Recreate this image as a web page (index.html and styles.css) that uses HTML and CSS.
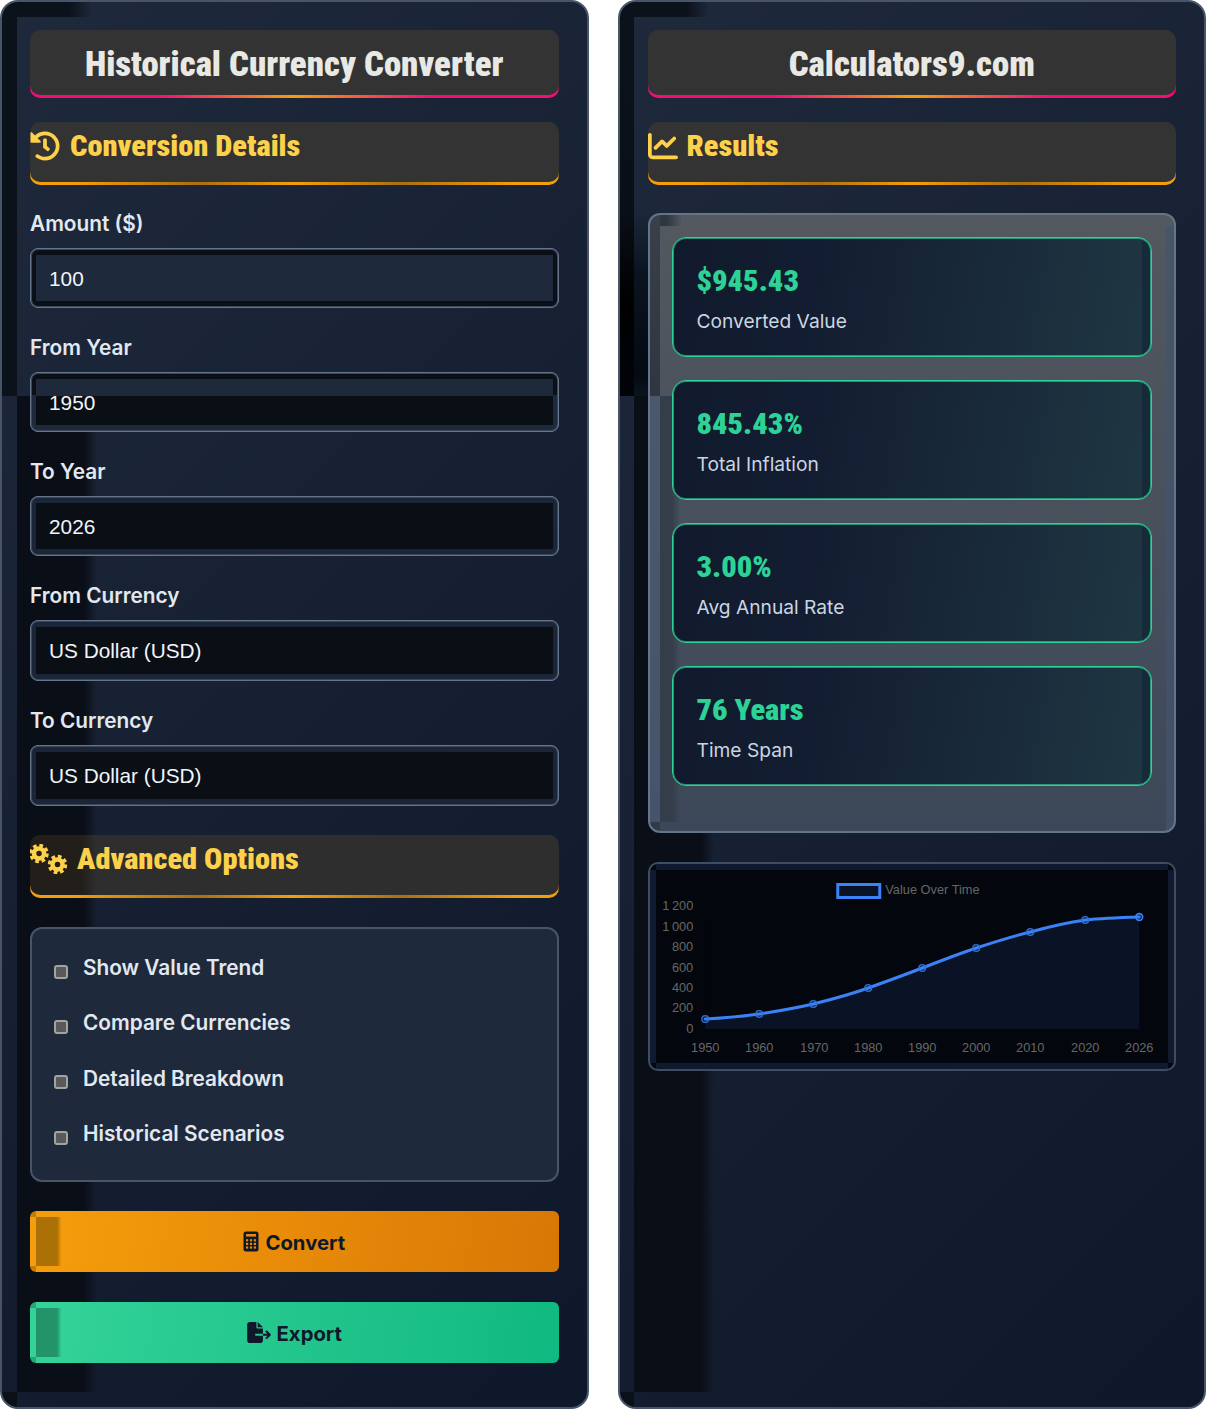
FILE: index.html
```html
<!DOCTYPE html>
<html lang="en">
<head>
<meta charset="utf-8">
<title>Historical Currency Converter</title>
<link rel="stylesheet" href="styles.css">
</head>
<body>
<main class="page">
  <section class="panel panel-form">
    <div class="banner"><h1 class="banner-inner">Historical Currency Converter</h1></div>
    <div class="section-head"><h2 class="section-inner">
      <svg class="icon-head" viewBox="0 0 512 512"><path d="M504 255.531c.253 136.64-111.18 248.372-247.82 248.468-59.015.042-113.223-20.53-155.822-54.911-11.077-8.94-11.905-25.541-1.839-35.607l11.267-11.267c8.609-8.609 22.353-9.551 31.891-1.984C173.062 425.135 212.781 440 256 440c101.705 0 184-82.311 184-184 0-101.705-82.311-184-184-184-48.814 0-93.149 18.969-126.068 49.932l50.754 50.754c10.08 10.08 2.941 27.314-11.313 27.314H24c-8.837 0-16-7.163-16-16V38.627c0-14.254 17.234-21.393 27.314-11.314l49.372 49.372C129.209 34.136 189.552 8 256 8c136.81 0 247.747 110.78 248 247.531zm-180.912 78.784l9.823-12.63c8.138-10.463 6.253-25.542-4.21-33.679L288 256.349V152c0-13.255-10.745-24-24-24h-16c-13.255 0-24 10.745-24 24v135.651l65.409 50.874c10.463 8.137 25.541 6.253 33.679-4.21z"/></svg>
      Conversion Details</h2></div>

    <div class="field first"><label class="field-label" for="amount">Amount ($)</label><input id="amount" class="control control-light" type="text" value="100"></div>
    <div class="field"><label class="field-label" for="from-year">From Year</label><input id="from-year" class="control control-split" type="text" value="1950"></div>
    <div class="field"><label class="field-label" for="to-year">To Year</label><input id="to-year" class="control control-dark" type="text" value="2026"></div>
    <div class="field"><label class="field-label" for="from-cur">From Currency</label><select id="from-cur" class="control control-dark control-select"><option>US Dollar (USD)</option></select></div>
    <div class="field"><label class="field-label" for="to-cur">To Currency</label><select id="to-cur" class="control control-dark control-select"><option>US Dollar (USD)</option></select></div>

    <div class="section-head section-advanced"><h2 class="section-inner section-inner-shaded">
      <svg class="icon-gears" viewBox="0 0 37 30">
        <circle class="gear-ring" cx="9" cy="9.5" r="5"/><circle class="gear-teeth" cx="9" cy="9.5" r="8"/>
        <circle class="gear-ring" cx="27.5" cy="20.5" r="5"/><circle class="gear-teeth" cx="27.5" cy="20.5" r="8"/>
      </svg>
      Advanced Options</h2></div>

    <div class="options">
      <label class="option"><input class="check" type="checkbox"><span>Show Value Trend</span></label>
      <label class="option"><input class="check" type="checkbox"><span>Compare Currencies</span></label>
      <label class="option"><input class="check" type="checkbox"><span>Detailed Breakdown</span></label>
      <label class="option"><input class="check" type="checkbox"><span>Historical Scenarios</span></label>
    </div>

    <button class="action action-convert" type="button">
      <svg class="icon-calc" viewBox="0 0 16 21"><rect x="0.5" y="0.5" width="15" height="20" rx="2.5" class="calc-body"/><rect x="3" y="3" width="10" height="2.6" class="calc-dot"/><rect x="3" y="8.2" width="2.2" height="2.2" class="calc-dot"/><rect x="6.9" y="8.2" width="2.2" height="2.2" class="calc-dot"/><rect x="10.8" y="8.2" width="2.2" height="2.2" class="calc-dot"/><rect x="3" y="11.8" width="2.2" height="2.2" class="calc-dot"/><rect x="6.9" y="11.8" width="2.2" height="2.2" class="calc-dot"/><rect x="10.8" y="11.8" width="2.2" height="2.2" class="calc-dot"/><rect x="3" y="15.4" width="2.2" height="2.2" class="calc-dot"/><rect x="6.9" y="15.4" width="2.2" height="2.2" class="calc-dot"/><rect x="10.8" y="15.4" width="2.2" height="2.2" class="calc-dot"/></svg>
      Convert</button>
    <button class="action action-export" type="button">
      <svg class="icon-export" viewBox="0 0 576 512"><path d="M0 64C0 28.7 28.7 0 64 0H224V128c0 17.7 14.3 32 32 32H384V288H216c-13.3 0-24 10.7-24 24s10.7 24 24 24H384V448c0 35.3-28.7 64-64 64H64c-35.3 0-64-28.7-64-64V64zM384 336V288H494.1l-39-39c-9.4-9.4-9.4-24.6 0-33.9s24.6-9.4 33.9 0l80 80c9.4 9.4 9.4 24.6 0 33.9l-80 80c-9.4 9.4-24.6 9.4-33.9 0s-9.4-24.6 0-33.9l39-39H384zm0-208H256V0L384 128z"/></svg>
      Export</button>
  </section>

  <section class="panel panel-results">
    <div class="banner"><h1 class="banner-inner">Calculators9.com</h1></div>
    <div class="section-head"><h2 class="section-inner section-inner-results">
      <svg class="icon-head" viewBox="0 0 512 512"><path d="M64 64c0-17.7-14.3-32-32-32S0 46.3 0 64V400c0 44.2 35.8 80 80 80H480c17.7 0 32-14.3 32-32s-14.3-32-32-32H80c-8.8 0-16-7.2-16-16V64zm406.6 86.6c12.5-12.5 12.5-32.8 0-45.3s-32.8-12.5-45.3 0L320 210.7l-57.4-57.4c-12.5-12.5-32.8-12.5-45.3 0l-112 112c-12.5 12.5-12.5 32.8 0 45.3s32.8 12.5 45.3 0L240 221.3l57.4 57.4c12.5 12.5 32.8 12.5 45.3 0l128-128z"/></svg>
      Results</h2></div>

    <div class="results">
      <article class="card"><div class="card-value">$945.43</div><div class="card-label">Converted Value</div></article>
      <article class="card"><div class="card-value">845.43%</div><div class="card-label">Total Inflation</div></article>
      <article class="card"><div class="card-value">3.00%</div><div class="card-label">Avg Annual Rate</div></article>
      <article class="card"><div class="card-value">76 Years</div><div class="card-label">Time Span</div></article>
    </div>

    <div class="chart-box">
      <svg class="chart" viewBox="0 0 512 193">
        <rect class="chart-area" x="49" y="47" width="434" height="112"/>
        <path class="chart-fill" d="M49 149 L103 144 L157 134 L212 118 L266 98 L320 78 L374 62 L429 50 L483 47 L483 159 L49 159 Z"/>
        <rect class="legend-box" x="181.5" y="14.5" width="42" height="13"/>
        <text class="chart-text" x="229" y="24">Value Over Time</text>
        <text class="chart-text tick-y" x="37" y="40">1&#8239;200</text>
        <text class="chart-text tick-y" x="37" y="61">1&#8239;000</text>
        <text class="chart-text tick-y" x="37" y="81">800</text>
        <text class="chart-text tick-y" x="37" y="102">600</text>
        <text class="chart-text tick-y" x="37" y="122">400</text>
        <text class="chart-text tick-y" x="37" y="142">200</text>
        <text class="chart-text tick-y" x="37" y="163">0</text>
        <text class="chart-text tick-x" x="49" y="182">1950</text>
        <text class="chart-text tick-x" x="103" y="182">1960</text>
        <text class="chart-text tick-x" x="158" y="182">1970</text>
        <text class="chart-text tick-x" x="212" y="182">1980</text>
        <text class="chart-text tick-x" x="266" y="182">1990</text>
        <text class="chart-text tick-x" x="320" y="182">2000</text>
        <text class="chart-text tick-x" x="374" y="182">2010</text>
        <text class="chart-text tick-x" x="429" y="182">2020</text>
        <text class="chart-text tick-x" x="483" y="182">2026</text>
        <path class="chart-line" d="M49 149 C67 148 85 146.5 103 144 C121 141 139 138.5 157 134 C175 129.5 194 124.5 212 118 C230 111.5 248 105 266 98 C284 91 302 84 320 78 C338 72 356 66.5 374 62 C392 57 411 52.5 429 50 C447 48 465 47.5 483 47"/>
        <circle class="chart-dot" cx="49" cy="149" r="3.4"/><circle class="chart-dot" cx="103" cy="144" r="3.4"/><circle class="chart-dot" cx="157" cy="134" r="3.4"/><circle class="chart-dot" cx="212" cy="118" r="3.4"/><circle class="chart-dot" cx="266" cy="98" r="3.4"/><circle class="chart-dot" cx="320" cy="78" r="3.4"/><circle class="chart-dot" cx="374" cy="62" r="3.4"/><circle class="chart-dot" cx="429" cy="50" r="3.4"/><circle class="chart-dot chart-dot-end" cx="483" cy="47" r="3.4"/>
      </svg>
    </div>
  </section>
</main>
</body>
</html>
```
FILE: styles.css
```css
* { box-sizing: border-box; }
html, body { margin: 0; padding: 0; background: #fff; }
body { font-family: Inter, "Noto Sans", sans-serif; color: #e2e8f0; }

.page {
  display: grid;
  grid-template-columns: 1fr 1fr;
  column-gap: 29px;
  height: 1409px;
}

.panel {
  border: 2px solid #475569;
  border-radius: 18px;
  padding: 28px 28px 0;
  background-color: #0f172a;
  background-repeat: no-repeat;
}

.panel-form {
  background-image:
    linear-gradient(#0c121b, #0c121b),
    linear-gradient(90deg, #0c121b 0, #0c121b 70%, transparent 100%),
    linear-gradient(90deg, #0a0e16 0, #0a0e16 84%, transparent 100%),
    linear-gradient(#0a0f18, #0a0f18),
    linear-gradient(135deg, #1e293b 0%, #0f172a 100%);
  background-size: 15px 394px, 75px 15px, 80px 996px, 15px 16px, 100% 100%;
  background-position: 0 0, 15px 0, 15px 394px, 0 1390px, 0 0;
}

.panel-results {
  background-image:
    linear-gradient(#0c121b 0, #0a0f17 210px, #000 300px, #02040a 394px),
    linear-gradient(90deg, #0c121b 0, #0c121b 70%, transparent 100%),
    linear-gradient(#1a2539 0, #0a1420 60px, #050a12 160px, #0a1420 181px),
    linear-gradient(90deg, #0a0e16 0, #0a0e16 84%, transparent 100%),
    linear-gradient(#0a0f18, #0a0f18),
    linear-gradient(135deg, #1e293b 0%, #0f172a 100%);
  background-size: 15px 394px, 75px 15px, 15px 181px, 80px 996px, 15px 16px, 100% 100%;
  background-position: -1px 0, 14px 0, 14px 213px, 14px 394px, -1px 1390px, 0 0;
}

/* page title with gradient underline */
.banner {
  border-radius: 10px;
  padding-bottom: 3px;
  background: linear-gradient(90deg, #f50d76 0%, #f50d76 24%, #f59e0b 50%, #f50d76 76%, #f50d76 100%) no-repeat bottom / 100% 20px;
}
.banner-inner {
  margin: 0;
  height: 65px;
  border-radius: 10px;
  background: #333;
  color: #e8e8e4;
  font-family: "Roboto Condensed", Roboto, sans-serif;
  font-stretch: 75%;
  font-size: 34.8px;
  font-weight: 900;
  line-height: 69px;
  text-align: center;
}

/* section heading */
.section-head {
  margin-top: 24px;
  border-radius: 10px;
  padding-bottom: 3px;
  background: linear-gradient(90deg, #f59e0b 0%, #f59e0b 8%, #a9700f 32%, #f59e0b 50%, #a9700f 70%, #f59e0b 92%, #f59e0b 100%) no-repeat bottom / 100% 20px;
}
.section-inner {
  display: flex;
  align-items: center;
  gap: 10px;
  margin: 0;
  height: 60px;
  padding-bottom: 12px;
  border-radius: 10px;
  background: #333;
  color: #fdd14a;
  font-family: "Roboto Condensed", Roboto, sans-serif;
  font-stretch: 75%;
  font-size: 30.4px;
  font-weight: 900;
  line-height: 46px;
}
.section-inner-shaded {
  background: linear-gradient(90deg, #221f1b 0, #221f1b 52px, #2e2e2e 66px);
}
.section-inner-results { gap: 9px; }
.section-advanced { margin-top: 29px; }

.icon-head { width: 30px; height: 30px; fill: #fdd14a; flex: none; }
.icon-gears { width: 37px; height: 30px; flex: none; }
.gear-ring { fill: none; stroke: #fdd14a; stroke-width: 4.5; }
.gear-teeth { fill: none; stroke: #fdd14a; stroke-width: 3.5; stroke-dasharray: 3.6 2.7; }

/* form fields */
.field { margin-top: 28px; }
.field.first { margin-top: 27px; }
.field-label {
  display: block;
  height: 24px;
  margin-bottom: 12px;
  font-size: 20.8px;
  font-weight: 600;
  line-height: 24px;
  color: #e2e8f0;
}
.control {
  display: block;
  width: 100%;
  height: 60px;
  padding: 1px 0 0 18px;
  border: 1px solid #64748b;
  border-radius: 8px;
  outline: none;
  color: #f1f5f9;
  font-family: "Liberation Sans", Arial, sans-serif;
  font-size: 20.8px;
  appearance: none;
  box-shadow: inset 0 0 0 1px #3a475b;
  background-repeat: no-repeat;
  background-position: center;
  background-size: calc(100% - 10px) calc(100% - 12px), 100% 100%;
}
.control-select { height: 61px; padding-top: 0; }
.control-light {
  background-image: linear-gradient(#1e293b, #1e293b), linear-gradient(#0b1018, #0b1018);
}
.control-split {
  background-image:
    linear-gradient(#1e293b 17px, #0a0e15 17px),
    linear-gradient(#0b1018 22px, #1e293b 22px);
}
.control-dark {
  background-image: linear-gradient(#0a0e15, #0a0e15), linear-gradient(#1a2537, #1a2537);
}

/* advanced options */
.options {
  margin-top: 29px;
  height: 255px;
  padding: 15px 22px;
  border: 2px solid #475569;
  border-radius: 12px;
  background: #1e293b;
}
.option {
  display: flex;
  align-items: center;
  gap: 15px;
  height: 55.3px;
  font-size: 20.8px;
  font-weight: 600;
  color: #e2e8f0;
}
.option span { padding-bottom: 8px; }
.check {
  appearance: none;
  width: 14px;
  height: 14px;
  margin: 0;
  flex: none;
  border: 2px solid #a3a3a3;
  border-radius: 3px;
  background: #595959;
}

/* buttons */
.action {
  display: flex;
  align-items: center;
  justify-content: center;
  gap: 6px;
  width: 100%;
  height: 61px;
  margin-top: 29px;
  padding: 1px 0 0;
  border: 0;
  border-radius: 6px;
  color: #0f172a;
  font-family: Inter, sans-serif;
  font-size: 20.3px;
  font-weight: 700;
  background-repeat: no-repeat;
  background-size: 30px 49px, 6px 6px, 6px 6px, 100% 100%;
  background-position: 6px 6px, 0 0, 0 100%, 0 0;
}
.action-convert {
  background-image:
    linear-gradient(90deg, #ab7006 0, #ab7006 70%, transparent 85%),
    linear-gradient(#c07d08, #c07d08),
    linear-gradient(#c07d08, #c07d08),
    linear-gradient(100deg, #f59e0b 0%, #d97706 100%);
}
.action-export {
  margin-top: 30px;
  background-image:
    linear-gradient(90deg, #23946a 0, #23946a 70%, transparent 85%),
    linear-gradient(#27a678, #27a678),
    linear-gradient(#27a678, #27a678),
    linear-gradient(100deg, #34d399 0%, #10b981 100%);
}
.icon-calc { width: 16px; height: 21px; flex: none; margin-top: -1px; }
.calc-body { fill: #0f172a; }
.action-convert .calc-dot { fill: #e38a08; }
.icon-export { width: 24px; height: 21px; fill: #0f172a; flex: none; margin-top: -1px; }

/* results */
.results {
  margin-top: 28px;
  height: 620px;
  padding: 22px;
  border: 2px solid #64748b;
  border-radius: 12px;
  background-repeat: no-repeat;
  background-image:
    linear-gradient(#3a404a, #2f3641),
    linear-gradient(90deg, #2f3541 0, #2f3541 30%, transparent 100%),
    linear-gradient(#2f3a4a, #2f3a4a),
    linear-gradient(#4b586b, #46536a),
    linear-gradient(90deg, #343d4a 0, #343d4a 60%, transparent 100%),
    linear-gradient(#485568, #415066),
    linear-gradient(180deg, #54585f 0%, #3c4859 100%);
  background-size: 10px 181px, 22px 11px, 10px 9px, 10px 426px, 20px 426px, 8px 605px, 100% 100%;
  background-position: 0 0, 10px 0, 0 100%, 0 181px, 10px 181px, 100% 11px, 0 0;
}
.card {
  height: 120px;
  margin-bottom: 23px;
  padding: 21px 24px 0;
  border: 1px solid #2dd296;
  border-radius: 14px;
  box-shadow: inset 0 0 0 1px rgba(45, 210, 150, 0.65);
  background-repeat: no-repeat;
  background-image:
    linear-gradient(#172a3a, #172a3a),
    linear-gradient(100deg, #111a2d 0%, #131d31 30%, #1f3743 100%);
  background-size: 9px 100%, 100% 100%;
  background-position: 100% 0, 0 0;
}
.card:last-child { margin-bottom: 0; }
.card-value {
  height: 44px;
  font-family: "Roboto Condensed", Roboto, sans-serif;
  font-stretch: 75%;
  font-size: 30.4px;
  font-weight: 900;
  line-height: 44px;
  color: #2dd296;
}
.card-label {
  margin-top: 4px;
  font-size: 19.2px;
  line-height: 28px;
  color: #cbd5e1;
}

/* chart */
.chart-box {
  margin-top: 29px;
  height: 209px;
  padding: 6px;
  border: 2px solid #3f4d62;
  border-radius: 10px;
  background-repeat: no-repeat;
  background-image:
    linear-gradient(#03060d, #03060d), linear-gradient(#03060d, #03060d),
    linear-gradient(#03060d, #03060d), linear-gradient(#03060d, #03060d),
    linear-gradient(#101a2e, #101a2e);
  background-size: 6px 6px, 6px 6px, 6px 6px, 6px 6px, 100% 100%;
  background-position: 0 0, 100% 0, 0 100%, 100% 100%, 0 0;
}
.chart { display: block; width: 100%; height: 193px; background: #03060d; }
.chart-area { fill: #03060d; }
.chart-fill { fill: #0a1326; }
.chart-line { fill: none; stroke: #3b82f6; stroke-width: 3; stroke-linecap: round; }
.chart-dot { fill: rgba(59, 130, 246, 0.2); stroke: #2f6fd6; stroke-width: 1.3; }
.chart-dot-end { stroke: #3b82f6; stroke-width: 1.6; }
.legend-box { fill: #0a1326; stroke: #3b82f6; stroke-width: 3; }
.chart-text { fill: #666; font-family: "Liberation Sans", Arial, sans-serif; font-size: 12.8px; }
.tick-y { text-anchor: end; }
.tick-x { text-anchor: middle; }
```
